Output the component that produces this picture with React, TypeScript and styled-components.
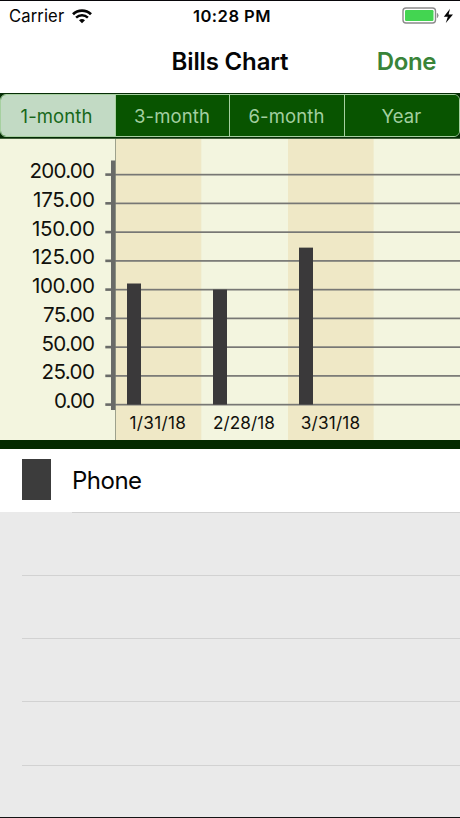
import React from 'react';
import styled, { createGlobalStyle } from 'styled-components';

const GlobalStyle = createGlobalStyle`
  * { box-sizing: border-box; }
  body { margin: 0; background: #eaeaea; }
`;

const Screen = styled.div`
  width: 460px;
  height: 818px;
  display: flex;
  flex-direction: column;
  overflow: hidden;
  background: #eaeaea;
  border-top: 1px solid #08060a;
  border-bottom: 1px solid #141414;
  font-family: Inter, 'Liberation Sans', sans-serif;
  color: #050505;
`;

const StatusBar = styled.header`
  display: grid;
  grid-template-columns: 1fr auto 1fr;
  align-items: center;
  flex: none;
  height: 28px;
  padding: 2px 5px 0 9px;
  background: #fff;
`;

const StatusGroup = styled.div<{ $end?: boolean }>`
  display: flex;
  align-items: center;
  justify-content: ${(p) => (p.$end ? 'flex-end' : 'flex-start')};
`;

const Carrier = styled.span`
  font-size: 16.6px;
  line-height: 22px;
  letter-spacing: 0.13px;
  margin-right: 8px;
`;

const Clock = styled.time`
  font-size: 16.6px;
  line-height: 22px;
  font-weight: 600;
  letter-spacing: 0.45px;
`;

const NavBar = styled.nav`
  display: grid;
  grid-template-columns: 1fr auto 1fr;
  align-items: center;
  flex: none;
  height: 64px;
  padding: 1px 24px 0;
  background: #fff;
`;

const Title = styled.h1`
  grid-column: 2;
  margin: 0;
  font-size: 24px;
  line-height: 33px;
  font-weight: 600;
  letter-spacing: -0.15px;
`;

const DoneButton = styled.button`
  justify-self: end;
  padding: 0;
  border: 0;
  background: none;
  font: 600 24px/33px Inter, sans-serif;
  letter-spacing: -0.4px;
  color: #398439;
`;

const SegmentBand = styled.div`
  flex: none;
  height: 46px;
  padding: 1px 0;
  background: #062c06;
  border-bottom: 1px solid #45643e;
`;

const Segments = styled.div`
  display: grid;
  grid-template-columns: 114px 114px 115px 1fr;
  height: 43px;
  overflow: hidden;
  border: 1px solid #a6d0a0;
  border-radius: 6px;
  background: #085400;
`;

const Segment = styled.button<{ $active?: boolean }>`
  padding: 0 ${(p) => (p.$active ? 3 : 1)}px 0 0;
  border: 0;
  border-left: ${(p) => (p.$active ? '0' : '1px solid #a6d0a0')};
  background: ${(p) => (p.$active ? '#c2dac4' : '#085400')};
  color: ${(p) => (p.$active ? '#17681a' : '#a3cfa0')};
  font: 400 18.5px/40px Inter, sans-serif;
  letter-spacing: 0.1px;
`;

const ChartPanel = styled.section`
  flex: none;
  height: 310px;
  border-bottom: 9px solid #042a00;
  background: #f3f5df;
`;

const ChartSvg = styled.svg`
  display: block;
  font-family: Inter, 'Liberation Sans', sans-serif;
  fill: #11110c;
`;

const Legend = styled.ul`
  margin: 0;
  padding: 0;
  list-style: none;
`;

const LegendRow = styled.li`
  display: flex;
  height: 63px;
  background: #fff;
  padding-left: 22px;
`;

const Swatch = styled.span`
  width: 29px;
  height: 41px;
  margin: 10px 21px 0 0;
  background: #3c3c3c;
`;

const LegendLabel = styled.span`
  flex: 1;
  font-size: 24px;
  line-height: 63px;
  letter-spacing: -0.5px;
`;

const EmptyRow = styled.li<{ $inset: number; $height: number }>`
  height: ${(p) => p.$height}px;
  margin-left: ${(p) => p.$inset}px;
  border-top: 1px solid #d2d2d2;
`;

const periods = ['1-month', '3-month', '6-month', 'Year'];
const ticks = [200, 175, 150, 125, 100, 75, 50, 25, 0];
const bills = [
  { date: '1/31/18', amount: 105.3 },
  { date: '2/28/18', amount: 100 },
  { date: '3/31/18', amount: 136.5 },
];
const labelWidths: Record<number, number> = {
  200: 65.5, 175: 62, 150: 63, 125: 63, 100: 63, 75: 52, 50: 53.5, 25: 53.5, 0: 41,
};
const zeroY = 265.6;
const yOf = (value: number) => zeroY - value * 1.15;

function WifiIcon() {
  return (
    <svg width="20" height="15" viewBox="0 0 20 15" fill="none" stroke="#050505">
      <path d="M1 5.2C6.1.4 13.9.4 19 5.2" strokeWidth="2.8" />
      <path d="M4.1 8.6C7.4 5.5 12.6 5.5 15.9 8.6" strokeWidth="2.5" />
      <path d="M7 11.2Q10 8.8 13 11.2L10 14.2Z" fill="#050505" stroke="none" />
    </svg>
  );
}

function BatteryIcon() {
  return (
    <svg width="53" height="18" viewBox="0 0 53 18">
      <rect x="1" y="1" width="32.5" height="15" rx="3" fill="#fff" stroke="#8b8b8b" strokeWidth="1.4" />
      <rect x="3" y="3" width="28.5" height="11" rx="1.2" fill="#43d551" />
      <path d="M35.3 6.3Q37.2 8.5 35.3 10.7Z" fill="#777" stroke="#777" strokeWidth=".5" />
      <path d="M48 1.8 41.8 9.8h4L43.8 16 51 7.6h-4.4Z" fill="#050505" />
    </svg>
  );
}

function BillsChart() {
  return (
    <ChartSvg width="460" height="301" viewBox="0 0 460 301">
      <rect x="115.3" width="86" height="301" fill="#efe8c6" />
      <rect x="288" width="85.6" height="301" fill="#efe8c6" />
      <rect x="115" width="1" height="301" fill="#9da18c" />
      {ticks.map((tick) => (
        <g key={tick}>
          <rect x="115" y={yOf(tick) - 0.8} width="345" height="1.7" fill="#777774" />
          <rect x="105.3" y={yOf(tick) - 1.3} width="7" height="2.6" fill="#696b68" />
          <text x="95" y={yOf(tick) + 3.4} fontSize="20.6" textAnchor="end" textLength={labelWidths[tick]}>
            {tick.toFixed(2)}
          </text>
        </g>
      ))}
      <rect x="111" y="21.5" width="4.3" height="249.5" fill="#696b68" />
      {bills.map((bill, i) => (
        <g key={bill.date}>
          <rect x={127 + i * 86} y={yOf(bill.amount)} width="14" height={bill.amount * 1.15} fill="#3a393a" />
          <text x={[129.5, 213, 300.7][i]} y="289.6" fontSize="17.2" textLength={[56.5, 62, 59.5][i]}>
            {bill.date}
          </text>
        </g>
      ))}
    </ChartSvg>
  );
}

export default function App() {
  return (
    <Screen>
      <GlobalStyle />
      <StatusBar>
        <StatusGroup>
          <Carrier>Carrier</Carrier>
          <WifiIcon />
        </StatusGroup>
        <Clock>10:28 PM</Clock>
        <StatusGroup $end>
          <BatteryIcon />
        </StatusGroup>
      </StatusBar>
      <NavBar>
        <Title>Bills Chart</Title>
        <DoneButton>Done</DoneButton>
      </NavBar>
      <SegmentBand>
        <Segments>
          {periods.map((period, i) => (
            <Segment key={period} $active={i === 0}>{period}</Segment>
          ))}
        </Segments>
      </SegmentBand>
      <ChartPanel>
        <BillsChart />
      </ChartPanel>
      <Legend>
        <LegendRow>
          <Swatch />
          <LegendLabel>Phone</LegendLabel>
        </LegendRow>
        <EmptyRow $inset={72} $height={63} />
        <EmptyRow $inset={22} $height={63} />
        <EmptyRow $inset={22} $height={63} />
        <EmptyRow $inset={22} $height={64} />
        <EmptyRow $inset={22} $height={52} />
      </Legend>
    </Screen>
  );
}
